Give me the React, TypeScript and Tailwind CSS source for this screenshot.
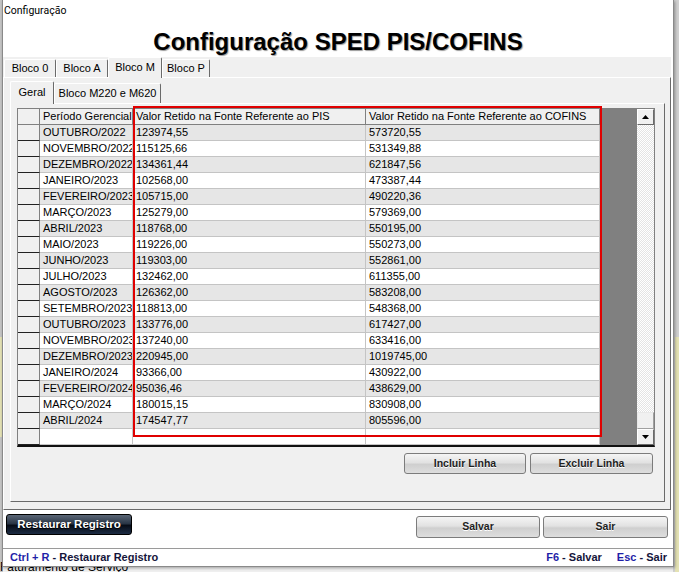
import React from "react";

const rows: [string, string, string][] = [
	["OUTUBRO/2022", "123974,55", "573720,55"],
	["NOVEMBRO/2022", "115125,66", "531349,88"],
	["DEZEMBRO/2022", "134361,44", "621847,56"],
	["JANEIRO/2023", "102568,00", "473387,44"],
	["FEVEREIRO/2023", "105715,00", "490220,36"],
	["MARÇO/2023", "125279,00", "579369,00"],
	["ABRIL/2023", "118768,00", "550195,00"],
	["MAIO/2023", "119226,00", "550273,00"],
	["JUNHO/2023", "119303,00", "552861,00"],
	["JULHO/2023", "132462,00", "611355,00"],
	["AGOSTO/2023", "126362,00", "583208,00"],
	["SETEMBRO/2023", "118813,00", "548368,00"],
	["OUTUBRO/2023", "133776,00", "617427,00"],
	["NOVEMBRO/2023", "137240,00", "633416,00"],
	["DEZEMBRO/2023", "220945,00", "1019745,00"],
	["JANEIRO/2024", "93366,00", "430922,00"],
	["FEVEREIRO/2024", "95036,46", "438629,00"],
	["MARÇO/2024", "180015,15", "830908,00"],
	["ABRIL/2024", "174547,77", "805596,00"],
];

function GrayButton({ label, className = "" }: { label: string; className?: string }) {
	return (
		<div
			className={
				"flex items-center justify-center rounded-[3px] border border-[#7c7c7c] bg-[linear-gradient(#f5f5f5,#e2e2e2_45%,#cfcfcf_55%,#dedede)] text-[10.5px] font-bold text-[#1e1e1e] [text-shadow:0_1px_0_#ffffff] " +
				className
			}
		>
			{label}
		</div>
	);
}

function Arrow({ up }: { up?: boolean }) {
	return (
		<div className="flex h-[16px] items-center justify-center border border-t-white border-l-white border-r-[#6a6a6a] border-b-[#6a6a6a] bg-[#f0f0f0]">
			<svg width="7" height="4" viewBox="0 0 7 4">
				{up ? <polygon points="0,4 7,4 3.5,0" fill="#000" /> : <polygon points="0,0 7,0 3.5,4" fill="#000" />}
			</svg>
		</div>
	);
}

function Tab({ label, selected, className = "" }: { label: string; selected?: boolean; className?: string }) {
	return (
		<div
			className={
				"relative flex items-center justify-center rounded-t-[2px] border-t border-l border-r border-t-white border-l-white border-r-[#6a6a6a] bg-[#f0f0f0] text-[11px] " +
				(selected ? "z-10 -mb-px pb-[2px] " : "") +
				className
			}
		>
			{label}
		</div>
	);
}

function Grid() {
	return (
		<div className="relative w-[638px] h-[339px]">
			<div className="flex h-full w-full overflow-hidden border-t border-l border-r border-b-2 border-t-[#808080] border-l-[#808080] border-r-[#808080] border-b-[#111]">
				<div className="w-[582px] bg-white">
					{/* header */}
					<div className="flex h-[16px] bg-[#f0f0f0] text-[11px] leading-[15px]">
						<div className="w-[22px] border-r border-b border-[#808080]" />
						<div className="w-[93px] overflow-hidden whitespace-nowrap border-r border-b border-[#808080] pl-[3px]">Período Gerencial</div>
						<div className="w-[233px] overflow-hidden whitespace-nowrap border-r border-b border-[#808080] pl-[3px]">Valor Retido na Fonte Referente ao PIS</div>
						<div className="w-[234px] overflow-hidden whitespace-nowrap border-r border-b border-[#808080] pl-[3px]">Valor Retido na Fonte Referente ao COFINS</div>
					</div>
					{rows.map((r, i) => (
						<div key={i} className={"flex h-[16px] text-[11px] leading-[15px] " + (i % 2 === 0 ? "bg-[#e6e6e6]" : "bg-white")}>
							<div className="w-[22px] border-r border-r-[#808080] border-b border-b-[#222] bg-[#f0f0f0]" />
							<div className="w-[93px] overflow-hidden whitespace-nowrap border-r border-b border-[#c4c4c4] pl-[3px]">{r[0]}</div>
							<div className="w-[233px] overflow-hidden whitespace-nowrap border-r border-b border-[#c4c4c4] pl-[3px]">{r[1]}</div>
							<div className="w-[234px] overflow-hidden whitespace-nowrap border-r border-b border-[#c4c4c4] pl-[3px]">{r[2]}</div>
						</div>
					))}
					<div className="flex h-[16px] bg-white">
						<div className="w-[22px] border-r border-r-[#808080] border-b border-b-[#222] bg-[#f0f0f0]" />
						<div className="w-[93px] border-r border-b border-[#c4c4c4]" />
						<div className="w-[233px] border-r border-b border-[#c4c4c4]" />
						<div className="w-[234px] border-r border-b border-[#c4c4c4]" />
					</div>
				</div>
				<div className="w-[37px] bg-[#808080]" />
				<div className="flex w-[17px] flex-col">
					<Arrow up />
					<div className="flex-1 bg-[image:repeating-conic-gradient(#e4e4e4_0%_25%,#ffffff_0%_50%)] bg-[length:2px_2px]" />
					<div className="h-[17px] border border-t-[#e8e8e8] border-l-[#e8e8e8] border-r-[#a0a0a0] border-b-[#a0a0a0] bg-[#f0f0f0]" />
					<Arrow />
				</div>
			</div>
			{/* marcação vermelha */}
			<div className="pointer-events-none absolute left-[116px] top-[-2px] h-[331px] w-[469px] border-2 border-[#e00000]" />
		</div>
	);
}

export default function App() {
	return (
		<div className="relative h-[572px] w-[679px] overflow-hidden bg-[#f0f0f0] font-['Liberation_Sans',Arial,sans-serif] text-black">
			{/* janela de fundo */}
			<div className="absolute left-0 top-0 h-full w-[3px] bg-[#c6c6c6]" />
			<div className="absolute left-0 top-[337px] h-[100px] w-[3px] bg-[#e4e2b4]" />
			<div className="absolute right-0 top-0 h-full w-[6px] bg-[#d0d0d0]" />
			<div className="absolute right-0 top-[337px] h-[235px] w-[4px] bg-[#e4e2b4]" />
			<div className="absolute left-0 top-[561px] text-[12px] leading-none">Faturamento de Serviço</div>

			<div className="absolute left-[2px] top-0 flex h-[567px] w-[672px] flex-col border-x border-b border-[#8a8a8a] bg-white shadow-[1px_1px_3px_rgba(0,0,0,0.35)]">
				<div className="flex h-[22px] items-center pl-[1px] font-['Roboto',sans-serif] text-[10.5px]">Configuração</div>
				<div className="flex h-[35px] items-center justify-center pt-[4px] text-[24px] font-bold leading-none [text-shadow:1px_1px_1px_#9a9a9a]">
					Configuração SPED PIS/COFINS
				</div>

				{/* abas externas */}
				<div className="flex h-[453px] w-[668px] flex-col bg-[#f0f0f0]">
					<div className="flex h-[20px] items-end pl-[1px]">
						<Tab label="Bloco 0" className="h-[18px] w-[52px]" />
						<Tab label="Bloco A" className="h-[18px] w-[52px]" />
						<Tab label="Bloco M" selected className="h-[21px] w-[54px]" />
						<Tab label="Bloco P" className="h-[18px] w-[48px]" />
					</div>
					<div className="flex-1 border border-t-white border-l-white border-r-[#6a6a6a] border-b-[#6a6a6a] pl-[6px] pt-[3px]">
						<div className="flex h-[22px] items-end">
							<Tab label="Geral" selected className="h-[23px] w-[44px]" />
							<Tab label="Bloco M220 e M620" className="h-[20px] w-[107px]" />
						</div>
						<div className="h-[399px] w-[655px] border border-t-white border-l-white border-r-[#6a6a6a] border-b-[#6a6a6a] pl-[6px] pt-[4px]">
							<Grid />
							<div className="mt-[6px] flex w-[639px] justify-end gap-[4px] pr-[3px]">
								<GrayButton label="Incluir Linha" className="h-[21px] w-[122px]" />
								<GrayButton label="Excluir Linha" className="h-[21px] w-[123px]" />
							</div>
						</div>
					</div>
				</div>

				{/* rodapé */}
				<div className="flex h-[38px] items-start justify-between pl-[3px] pr-[5px] pt-[4px]">
					<div className="flex h-[21px] w-[126px] items-center justify-center rounded-[3px] border border-black bg-[linear-gradient(#5a6676,#2a3646_45%,#070d18_55%,#1c2c44)] text-[11.5px] font-bold text-white [text-shadow:0_1px_1px_#000]">
						Restaurar Registro
					</div>
					<div className="mt-[2px] flex gap-[3px]">
						<GrayButton label="Salvar" className="h-[22px] w-[124px]" />
						<GrayButton label="Sair" className="h-[22px] w-[125px]" />
					</div>
				</div>
				<div className="flex h-[18px] items-center justify-between border-t border-[#9a9a9a] pl-[7px] pr-[6px] text-[11px] font-bold">
					<div>
						<span className="text-[#1f1fa8]">Ctrl + R</span>
						<span className="text-[#14143a]"> - Restaurar Registro</span>
					</div>
					<div className="flex gap-[15px]">
						<div>
							<span className="text-[#1f1fa8]">F6</span>
							<span className="text-[#14143a]"> - Salvar</span>
						</div>
						<div>
							<span className="text-[#1f1fa8]">Esc</span>
							<span className="text-[#14143a]"> - Sair</span>
						</div>
					</div>
				</div>
			</div>
		</div>
	);
}
